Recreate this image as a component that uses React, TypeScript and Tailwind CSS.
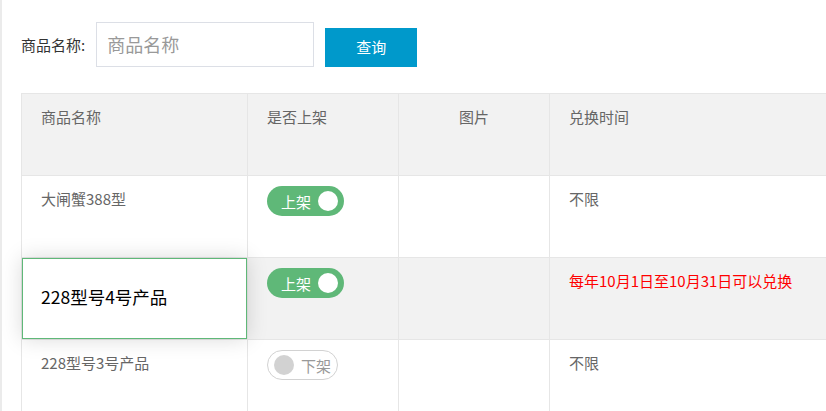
import React from 'react';

const font = { fontFamily: '"Noto Sans CJK SC", "Noto Sans", sans-serif' };

function Switch({ on }: { on: boolean }) {
  if (on) {
    return (
      <div className="h-[30px] w-[77px] rounded-full bg-[#5fb878] flex items-center pl-[14px] pr-[6px] justify-between">
        <span className="text-white text-[15px] leading-none">上架</span>
        <span className="w-[20px] h-[20px] rounded-full bg-white"></span>
      </div>
    );
  }
  return (
    <div className="h-[30px] w-[71px] rounded-full border border-[#d2d2d2] bg-white flex items-center pl-[6px] gap-[7px]">
      <span className="w-[20px] h-[20px] rounded-full bg-[#d2d2d2]"></span>
      <span className="text-[#999] text-[15px] leading-none">下架</span>
    </div>
  );
}

export default function App() {
  const rows = [
    { name: '大闸蟹388型', on: true, time: '不限', red: false, editing: false },
    { name: '228型号4号产品', on: true, time: '每年10月1日至10月31日可以兑换', red: true, editing: true },
    { name: '228型号3号产品', on: false, time: '不限', red: false, editing: false },
  ];

  return (
    <div className="w-[826px] h-[411px] overflow-hidden bg-white border-l-2 border-[#ebebeb] pl-[19px]" style={font}>
      <div className="flex items-end pt-[22px]">
        <span className="text-[15px] text-[#333] mb-[11px] mr-[11px]">商品名称:</span>
        <div className="w-[218px] h-[45px] border border-[#dcdfe6] flex items-center pl-[10px]">
          <span className="text-[18px] text-[#999]">商品名称</span>
        </div>
        <button className="ml-[11px] w-[92px] h-[39px] bg-[#0099cb] text-white text-[15px]">查询</button>
      </div>

      <div className="mt-[26px] w-[900px] border-t border-l border-[#e6e6e6] text-[15px] text-[#666]">
        <div className="flex h-[82px] bg-[#f2f2f2] border-b border-[#e6e6e6]">
          <div className="w-[226px] border-r border-[#e6e6e6] pl-[19px] pt-[8px] leading-[30px]">商品名称</div>
          <div className="w-[151px] border-r border-[#e6e6e6] pl-[19px] pt-[8px] leading-[30px]">是否上架</div>
          <div className="w-[151px] border-r border-[#e6e6e6] pt-[8px] leading-[30px] text-center">图片</div>
          <div className="flex-1 pl-[19px] pt-[8px] leading-[30px]">兑换时间</div>
        </div>
        {rows.map((r) => (
          <div key={r.name} className={`flex h-[82px] border-b border-[#e6e6e6] ${r.editing ? 'bg-[#f2f2f2]' : 'bg-white'}`}>
            <div className="relative w-[226px] border-r border-[#e6e6e6] pl-[19px] pt-[8px] leading-[30px]">
              {r.editing ? (
                <div className="absolute inset-0 bg-white border border-[#5fb878] shadow-[0_0_20px_rgba(0,0,0,0.15)] flex items-center pl-[18px] pb-[3px] text-[17.5px] text-black z-10">
                  {r.name}
                </div>
              ) : (
                r.name
              )}
            </div>
            <div className="w-[151px] border-r border-[#e6e6e6] pl-[19px] pt-[10px]">
              <Switch on={r.on} />
            </div>
            <div className="w-[151px] border-r border-[#e6e6e6]"></div>
            <div className={`flex-1 pl-[19px] pt-[8px] leading-[30px] ${r.red ? 'text-[#ff0000]' : ''}`}>{r.time}</div>
          </div>
        ))}
      </div>
    </div>
  );
}
